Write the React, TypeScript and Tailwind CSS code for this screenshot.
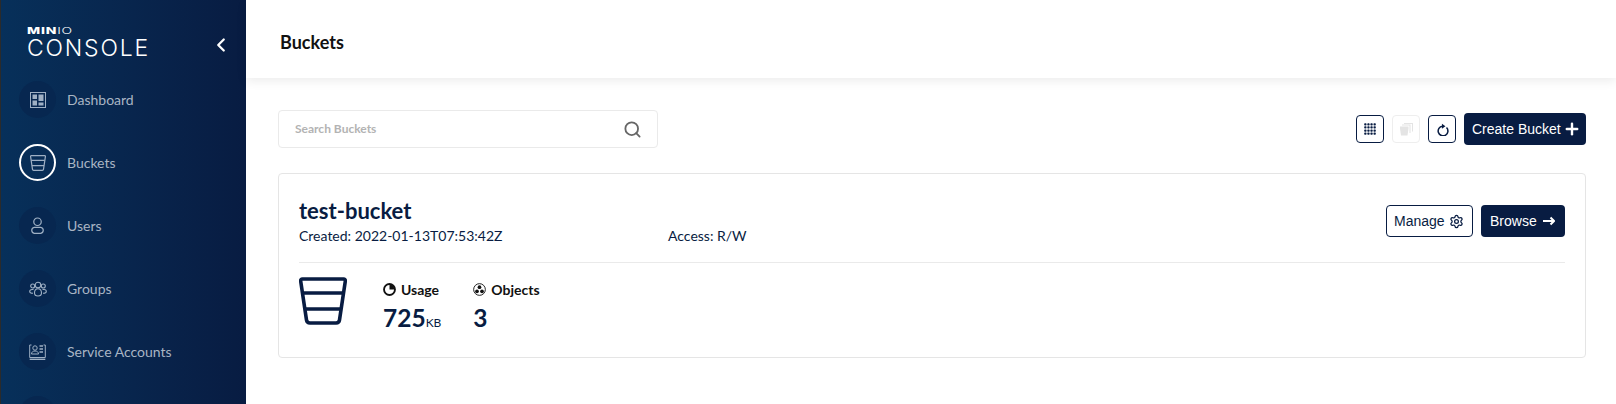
import type { ReactNode } from "react";
import { ChevronLeft, Plus, Search, Settings } from "lucide-react";

function BucketIcon({ className = "" }: { className?: string }) {
  return (
    <svg viewBox="0 0 48 48" fill="none" stroke="currentColor" strokeWidth="3.600" strokeLinejoin="round" className={className}>
      <path d="M3.500 2h41a1.800 1.800 0 0 1 1.800 2.200L40.500 43a3.500 3.500 0 0 1-3.400 3H10.900a3.500 3.500 0 0 1-3.400-3L1.700 4.200A1.800 1.800 0 0 1 3.500 2z" />
      <path d="M3.600 16h40.800M5.700 32h36.600" />
    </svg>
  );
}

function DashboardIcon() {
  return (
    <svg viewBox="0 0 16 16" className="w-4 h-4">
      <rect x="0.5" y="0.5" width="15" height="15" fill="none" stroke="currentColor" />
      <rect x="2.500" y="2.500" width="4.500" height="4.500" fill="currentColor" />
      <rect x="2.500" y="8.500" width="4.500" height="5" fill="currentColor" />
      <rect x="8.500" y="2.500" width="5" height="6.500" fill="currentColor" />
      <rect x="8.500" y="10.500" width="5" height="3" fill="currentColor" />
    </svg>
  );
}

function UserIcon() {
  return (
    <svg viewBox="0 0 16 18" fill="none" stroke="currentColor" strokeWidth="1.300" className="w-[15px] h-[17px]">
      <circle cx="8" cy="5" r="4" />
      <path d="M4.500 11h7a3.200 3.200 0 0 1 0 6.300h-7a3.200 3.200 0 0 1 0-6.300z" />
    </svg>
  );
}

function GroupsIcon() {
  return (
    <svg viewBox="0 0 18 16" fill="none" stroke="currentColor" strokeWidth="1.100" className="w-[18px] h-4">
      <circle cx="9" cy="4" r="2.800" />
      <circle cx="3.700" cy="5" r="2" />
      <circle cx="14.300" cy="5" r="2" />
      <path d="M5.500 12c0-3 1.500-4.200 3.500-4.200s3.500 1.200 3.500 4.200c0 2-1.500 3-3.500 3s-3.500-1-3.500-3z" />
      <path d="M4.500 8.500H3C1.500 8.500.7 9.500.7 10.500s1 1.800 3.300 1.800M13.500 8.500H15c1.500 0 2.300 1 2.300 2s-1 1.800-3.300 1.800" />
    </svg>
  );
}

function AccountsIcon() {
  return (
    <svg viewBox="0 0 17 16" fill="none" stroke="currentColor" strokeWidth="1" className="w-[17px] h-4">
      <path d="M2.500 1H.7v12.500h15.600V1h-1.800" />
      <circle cx="6" cy="4" r="2.200" />
      <path d="M2.500 10c0-2 1.500-3 3.500-3s3.500 1 3.500 3z" />
      <path d="M10.500 2h3.500M10.500 5h3.500M10.500 8h3.500" strokeWidth="1.500" />
      <path d="M.7 15.300h15.600" strokeWidth="1.400" />
    </svg>
  );
}

function GridIcon() {
  const cells = [0.2, 3.300, 6.400, 9.500];
  return (
    <svg viewBox="0 0 12 12" className="w-3 h-3" fill="currentColor">
      {cells.flatMap((y) => cells.map((x) => <rect key={`${x}-${y}`} x={x} y={y} width="2.300" height="2.300" rx="0.8" />))}
    </svg>
  );
}

function CopyIcon() {
  return (
    <svg viewBox="0 0 13 13" className="w-[13px] h-[13px]" fill="currentColor">
      <path d="M0 3.500h8.500v2l-1 7H1l-1-7z" />
      <path d="M2 1.500h8.500v8.500h-1V2.500H2zM4 0h9v8.500h-1V1H4z" />
    </svg>
  );
}

function RefreshIcon() {
  return (
    <svg viewBox="0 0 12 12" className="w-[13px] h-[13px]" fill="none" stroke="currentColor" strokeWidth="1.400">
      <path d="M9.700 4.200A4.500 4.500 0 1 1 6 2.900" />
      <path d="M5.500.6 8.700 2.900 5.500 5.200z" fill="currentColor" stroke="none" />
    </svg>
  );
}

function ArrowIcon() {
  return (
    <svg viewBox="0 0 12 10" className="w-3 h-[10px]" fill="none" stroke="currentColor" strokeWidth="2">
      <path d="M0 5h10.500M7.500 1.500 11 5 7.500 8.500" />
    </svg>
  );
}

function UsageIcon() {
  return (
    <svg viewBox="0 0 14 14" className="w-[13px] h-[13px]">
      <circle cx="7" cy="7" r="5.900" fill="none" stroke="currentColor" strokeWidth="2" />
      <path d="M7 1.500A5.500 5.500 0 0 1 12.500 7H7z" fill="currentColor" />
    </svg>
  );
}

function ObjectsIcon() {
  return (
    <svg viewBox="0 0 14 14" className="w-[13px] h-[13px]" fill="currentColor">
      <circle cx="7" cy="7" r="6.300" fill="none" stroke="currentColor" strokeWidth="1" />
      <circle cx="7" cy="4.500" r="2" />
      <circle cx="4.300" cy="9" r="2" />
      <circle cx="9.700" cy="9" r="2" />
    </svg>
  );
}

const navItems: { label: string; icon: ReactNode; active?: boolean }[] = [
  { label: "Dashboard", icon: <DashboardIcon /> },
  { label: "Buckets", icon: <BucketIcon className="w-4 h-4" />, active: true },
  { label: "Users", icon: <UserIcon /> },
  { label: "Groups", icon: <GroupsIcon /> },
  { label: "Service Accounts", icon: <AccountsIcon /> },
  { label: "", icon: null },
];

function Sidebar() {
  return (
    <aside className="w-[246px] shrink-0 h-full overflow-hidden border-l border-[#2b2b2b] bg-gradient-to-r from-[#07305a] to-[#081c42]">
      <div className="h-[81px] pl-[26px] pr-[14px] pt-[27px] flex items-start justify-between text-white">
        <div className="font-['Inter',sans-serif]">
          <div className="text-[9px] leading-[8px] tracking-[0.5px] origin-left scale-x-[1.55] whitespace-nowrap">
            <span className="font-extrabold">MIN</span>
            <span className="font-light">IO</span>
          </div>
          <div className="text-[23px] leading-[22px] mt-[2px] font-light tracking-[1.8px]">CONSOLE</div>
        </div>
        <ChevronLeft size={22} strokeWidth={2.500} className="mt-[7px]" />
      </div>
      <nav className="flex flex-col gap-[26px] pl-[18px]">
        {navItems.map((item, i) => (
          <div key={i} className="flex items-center gap-[11px] h-[37px]">
            <span
              className={`w-[37px] h-[37px] rounded-full flex items-center justify-center text-[#9fb0c4] ${
                item.active ? "border-2 border-white" : "bg-[#072750]"
              }`}
            >
              {item.icon}
            </span>
            <span className="text-sm text-[#a9b5c4]">{item.label}</span>
          </div>
        ))}
      </nav>
    </aside>
  );
}

export default function App() {
  return (
    <div className="flex w-[1616px] h-[404px] overflow-hidden bg-white font-['Lato',sans-serif] text-[#081c42]">
      <Sidebar />
      <main className="flex-1 min-w-0 flex flex-col">
        <header className="h-[78px] flex items-center pl-[34px] pt-[6px] shadow-[0_3px_10px_rgba(0,0,0,0.08)]">
          <h1 className="text-lg font-bold text-[#111]">Buckets</h1>
        </header>
        <div className="pl-8 pr-[30px] pt-8">
          <div className="flex items-center justify-between h-[38px]">
            <div className="w-[380px] h-[38px] rounded border border-[#eaeaea] flex items-center justify-between pl-[16px] pr-[15px]">
              <span className="text-xs font-bold text-[#b3b3b3]">Search Buckets</span>
              <Search size={19} strokeWidth={2.300} className="text-[#666]" />
            </div>
            <div className="flex items-center gap-2 font-['Liberation_Sans',sans-serif]">
              <button className="w-7 h-7 rounded border border-[#081c42] flex items-center justify-center">
                <GridIcon />
              </button>
              <button className="w-7 h-7 rounded border border-[#eeeeee] text-[#e4e4e4] flex items-center justify-center">
                <CopyIcon />
              </button>
              <button className="w-7 h-7 rounded border border-[#081c42] flex items-center justify-center">
                <RefreshIcon />
              </button>
              <button className="h-8 w-[122px] rounded bg-[#081c42] text-white text-sm flex items-center pl-[8px] gap-[2px]">
                Create Bucket <Plus size={18} strokeWidth={3.200} />
              </button>
            </div>
          </div>
          <section className="mt-[25px] h-[185px] rounded border border-[#e5e5e5] px-[20px]">
            <div className="h-[89px] border-b border-[#eaeaea] flex justify-between pt-[23px]">
              <div>
                <h2 className="text-[22px] leading-[27px] font-bold">test-bucket</h2>
                <div className="flex text-sm leading-[17px] mt-[3px]">
                  <span className="w-[369px]">Created: 2022-01-13T07:53:42Z</span>
                  <span>Access: R/W</span>
                </div>
              </div>
              <div className="flex gap-2 pt-[8px] text-sm font-['Liberation_Sans',sans-serif]">
                <button className="w-[87px] h-8 rounded border border-[#081c42] flex items-center pl-[7px] gap-[4px]">
                  Manage <Settings size={15} strokeWidth={2} />
                </button>
                <button className="w-[84px] h-8 rounded bg-[#081c42] text-white flex items-center pl-[9px] gap-[6px]">
                  Browse <ArrowIcon />
                </button>
              </div>
            </div>
            <div className="flex pt-[14px]">
              <BucketIcon className="w-12 h-12" />
              <div className="ml-[36px] pt-[2px]">
                <div className="flex items-center gap-[5px] text-sm leading-[17px] font-bold text-[#111] pt-[2px]">
                  <UsageIcon /> Usage
                </div>
                <div className="text-[24.5px] leading-[32px] font-bold mt-[4px]">
                  725<span className="text-xs font-normal">KB</span>
                </div>
              </div>
              <div className="ml-[32px] pt-[2px]">
                <div className="flex items-center gap-[5px] text-sm leading-[17px] font-bold text-[#111] pt-[2px]">
                  <ObjectsIcon /> Objects
                </div>
                <div className="text-[24.5px] leading-[32px] font-bold mt-[4px]">3</div>
              </div>
            </div>
          </section>
        </div>
      </main>
    </div>
  );
}
